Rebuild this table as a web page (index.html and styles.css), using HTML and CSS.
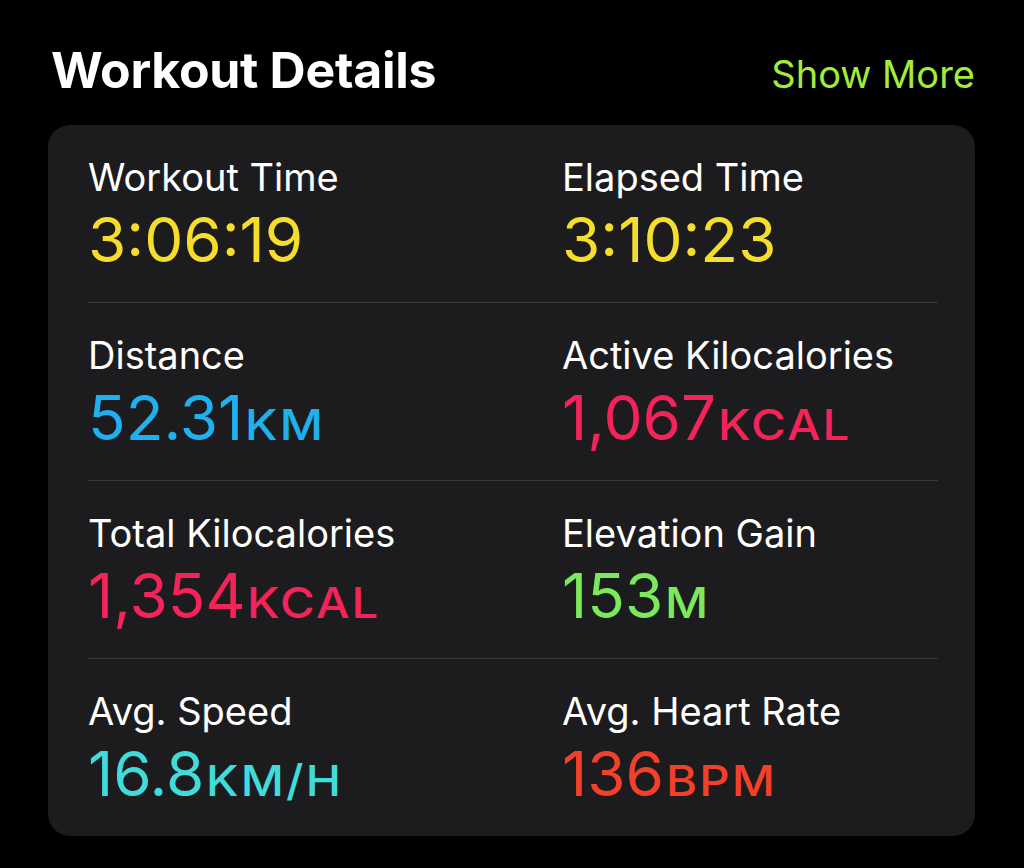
FILE: index.html
```html
<!DOCTYPE html>
<html>
<head>
<meta charset="utf-8">
<link rel="stylesheet" href="styles.css">
</head>
<body>
<div class="page">
  <div class="header">
    <h1 class="title">Workout Details</h1>
    <span class="more">Show More</span>
  </div>
  <div class="card">
    <div class="row">
      <div class="cell">
        <div class="label">Workout Time</div>
        <div class="value yellow">3:06:19</div>
      </div>
      <div class="cell">
        <div class="label">Elapsed Time</div>
        <div class="value yellow">3:10:23</div>
      </div>
    </div>
    <div class="row">
      <div class="cell">
        <div class="label">Distance</div>
        <div class="value blue">52.31<span class="unit">KM</span></div>
      </div>
      <div class="cell">
        <div class="label">Active Kilocalories</div>
        <div class="value pink">1,067<span class="unit">KCAL</span></div>
      </div>
    </div>
    <div class="row">
      <div class="cell">
        <div class="label">Total Kilocalories</div>
        <div class="value pink">1,354<span class="unit">KCAL</span></div>
      </div>
      <div class="cell">
        <div class="label">Elevation Gain</div>
        <div class="value green">153<span class="unit">M</span></div>
      </div>
    </div>
    <div class="row">
      <div class="cell">
        <div class="label">Avg. Speed</div>
        <div class="value cyan">16.8<span class="unit">KM/H</span></div>
      </div>
      <div class="cell">
        <div class="label">Avg. Heart Rate</div>
        <div class="value red">136<span class="unit">BPM</span></div>
      </div>
    </div>
  </div>
</div>
</body>
</html>
```

FILE: styles.css
```css
html, body {
  margin: 0;
  padding: 0;
  background: #000;
}
body {
  font-family: "Inter", "Liberation Sans", sans-serif;
  color: #fff;
}
.page {
  padding: 40px 49px 0 48px;
}
.header {
  display: flex;
  justify-content: space-between;
  align-items: baseline;
  padding-left: 3px;
}
.title {
  margin: 0;
  font-size: 50px;
  line-height: 60px;
  font-weight: 700;
  letter-spacing: -0.3px;
}
.more {
  font-size: 38px;
  line-height: 60px;
  color: #a4ec3a;
}
.card {
  margin-top: 21px;
  background: #1c1c1e;
  border-radius: 22px;
  padding: 0 37px 0 40px;
}
.row {
  display: grid;
  grid-template-columns: 474px 1fr;
  padding: 29px 0 26px;
  border-bottom: 1px solid #38383a;
}
.row:last-child {
  border-bottom: none;
  padding-bottom: 26px;
}
.label {
  font-size: 38px;
  line-height: 46px;
}
.value {
  margin-top: 4px;
  font-size: 62px;
  line-height: 72px;
}
.unit {
  display: inline-block;
  font-size: 43px;
  line-height: 1;
  font-weight: 500;
  letter-spacing: 2px;
  margin-left: 2px;
  transform: scaleX(1.1);
  transform-origin: left bottom;
}
.yellow { color: #f5dd2e; }
.blue { color: #1fb0ef; }
.pink { color: #f4235a; }
.green { color: #7ce85c; }
.cyan { color: #40dbdb; }
.red { color: #f2402a; }
```
